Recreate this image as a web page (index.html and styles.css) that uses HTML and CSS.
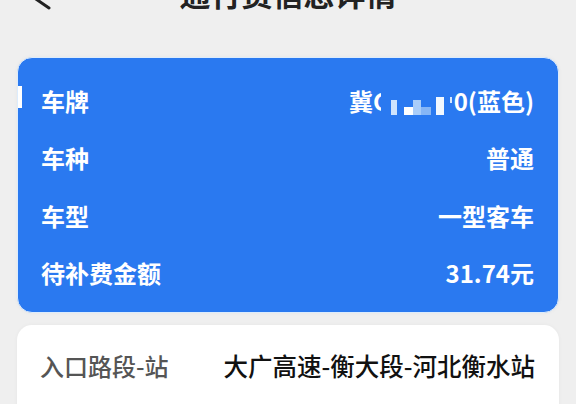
FILE: index.html
```html
<!DOCTYPE html>
<html lang="zh-CN">
<head>
<meta charset="utf-8">
<title>通行费信息详情</title>
<link rel="stylesheet" href="styles.css">
</head>
<body>
<div class="page">
  <header class="header">
    <div class="back">
      <svg width="40" height="40" viewBox="0 0 40 40"><polyline points="27,10 13,24 29,35" fill="none" stroke="#222" stroke-width="3" stroke-linecap="round" stroke-linejoin="round"/></svg>
    </div>
    <h1 class="title">通行费信息详情</h1>
    <div class="spacer"></div>
  </header>

  <section class="card card-blue">
    <div class="row row-first">
      <span class="marker"></span>
      <span class="label">车牌</span>
      <span class="value">冀C<svg class="mosaic" width="72" height="30" viewBox="0 0 72 30"><rect x="0" y="0" width="72" height="30" fill="#2a79f0"/><rect x="10" y="14" width="6" height="15" fill="#cfe4fd"/><rect x="23" y="21" width="9" height="8" fill="#ffffff"/><rect x="32" y="14" width="8" height="15" fill="#a9cdf9"/><rect x="40" y="21" width="10" height="8" fill="#86b6f6"/><rect x="55" y="11" width="8" height="18" fill="#f2f8ff"/><rect x="69" y="11" width="2" height="6" fill="#d5e7fd"/></svg>0(蓝色)</span>
    </div>
    <div class="row">
      <span class="label">车种</span>
      <span class="value">普通</span>
    </div>
    <div class="row">
      <span class="label">车型</span>
      <span class="value">一型客车</span>
    </div>
    <div class="row">
      <span class="label">待补费金额</span>
      <span class="value">31.74元</span>
    </div>
  </section>

  <section class="card card-white">
    <div class="row">
      <span class="label">入口路段-站</span>
      <span class="value">大广高速-衡大段-河北衡水站</span>
    </div>
  </section>
</div>
</body>
</html>
```

FILE: styles.css
```css
html, body {
  margin: 0;
  padding: 0;
  background: #efefef;
}

body {
  font-family: "Noto Sans CJK SC", "Noto Sans", sans-serif;
  overflow: hidden;
}

.page {
  display: flex;
  flex-direction: column;
}

.header {
  display: grid;
  grid-template-columns: 1fr auto 1fr;
  height: 40px;
  margin-top: -27px;
}

.back {
  padding-left: 20px;
  height: 40px;
}

.back svg {
  display: block;
}

.title {
  margin: 0;
  font-size: 31px;
  line-height: 40px;
  font-weight: 700;
  color: #222;
  text-align: center;
}

.card {
  margin: 0 17px;
  border-radius: 15px;
}

.card-blue {
  margin-top: 44px;
  background: #2a79f0;
  border: 1.5px solid #dcecfd;
  padding: 13.5px 0 10px;
  color: #fff;
  box-shadow: 0 0 4px rgba(0, 0, 0, 0.04);
}

.card-blue .row {
  font-weight: 700;
  font-size: 24px;
}

.row {
  display: flex;
  align-items: center;
  justify-content: space-between;
  height: 57.5px;
  padding: 0 24px 0 23px;
}

.row-first {
  padding-left: 0;
}

.marker {
  width: 4px;
  height: 22px;
  background: #fff;
  margin-right: 19px;
  margin-top: -6px;
}

.row-first .label {
  flex: 1;
}

.value {
  display: flex;
  align-items: center;
  white-space: nowrap;
}

.mosaic {
  display: block;
  margin-left: -8px;
  margin-right: 1px;
  margin-top: 2px;
}

.card-white {
  margin-top: 12px;
  background: #fff;
  padding-top: 12px;
  height: 120px;
  box-shadow: 0 0 4px rgba(0, 0, 0, 0.04);
}

.card-white .row {
  padding: 0 24px 0 23px;
}

.card-white .label {
  font-size: 24px;
  font-weight: 500;
  color: #555;
}

.card-white .value {
  font-size: 24.5px;
  font-weight: 500;
  color: #111;
}
```
